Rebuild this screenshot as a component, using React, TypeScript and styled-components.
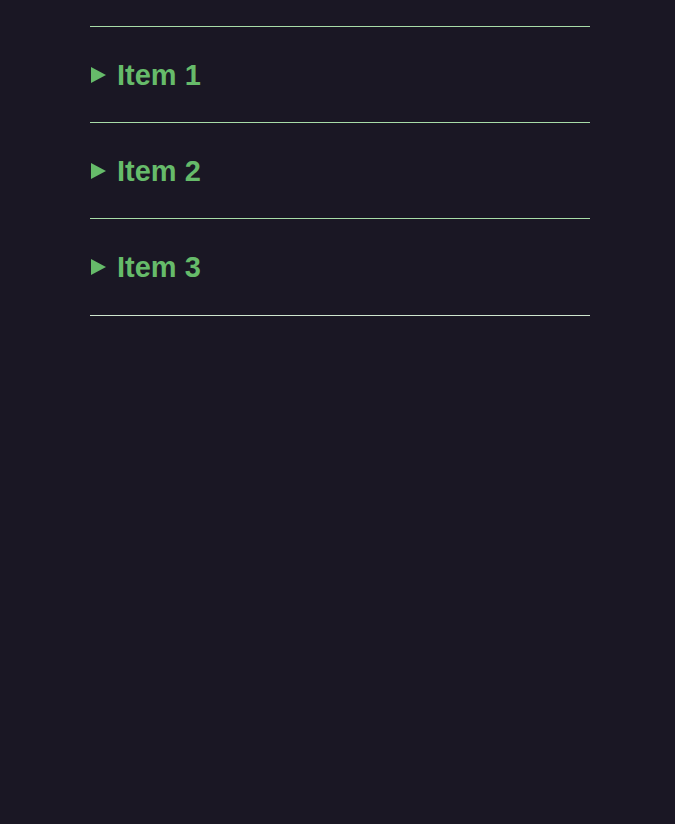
import { createGlobalStyle } from "styled-components";
import styled from "styled-components";

const items = ["Item 1", "Item 2", "Item 3"];

const App = () => {
  return (
    <Page>
      <GlobalStyle />
      <List>
        {items.map((label) => (
          <Item key={label}>
            <Summary>{label}</Summary>
          </Item>
        ))}
      </List>
    </Page>
  );
};

export default App;

const GlobalStyle = createGlobalStyle`
  html, body {
    margin: 0;
    background: #1a1724;
  }
  body {
    font-family: "Liberation Sans", Arial, sans-serif;
  }
`;

const Page = styled.div`
  min-height: 824px;
  padding: 26px 0 0 90px;
  box-sizing: border-box;
`;

const List = styled.div`
  width: 500px;
  border-bottom: 1px solid #cfe6cf;
`;

const Item = styled.details`
  border-top: 1px solid #a8dca8;

  &:last-child {
    padding-bottom: 1px;
  }
`;

const Summary = styled.summary`
  display: flex;
  align-items: center;
  gap: 11px;
  cursor: pointer;
  list-style: none;
  padding: 32px 0 30px 1px;
  line-height: 33px;
  font-size: 29px;
  font-weight: 700;
  color: #66bb6a;

  &::-webkit-details-marker {
    display: none;
  }

  &::before {
    content: "";
    width: 0;
    height: 0;
    border-left: 15px solid #66bb6a;
    border-top: 8px solid transparent;
    border-bottom: 8px solid transparent;
    margin-top: -1px;
  }
`;
